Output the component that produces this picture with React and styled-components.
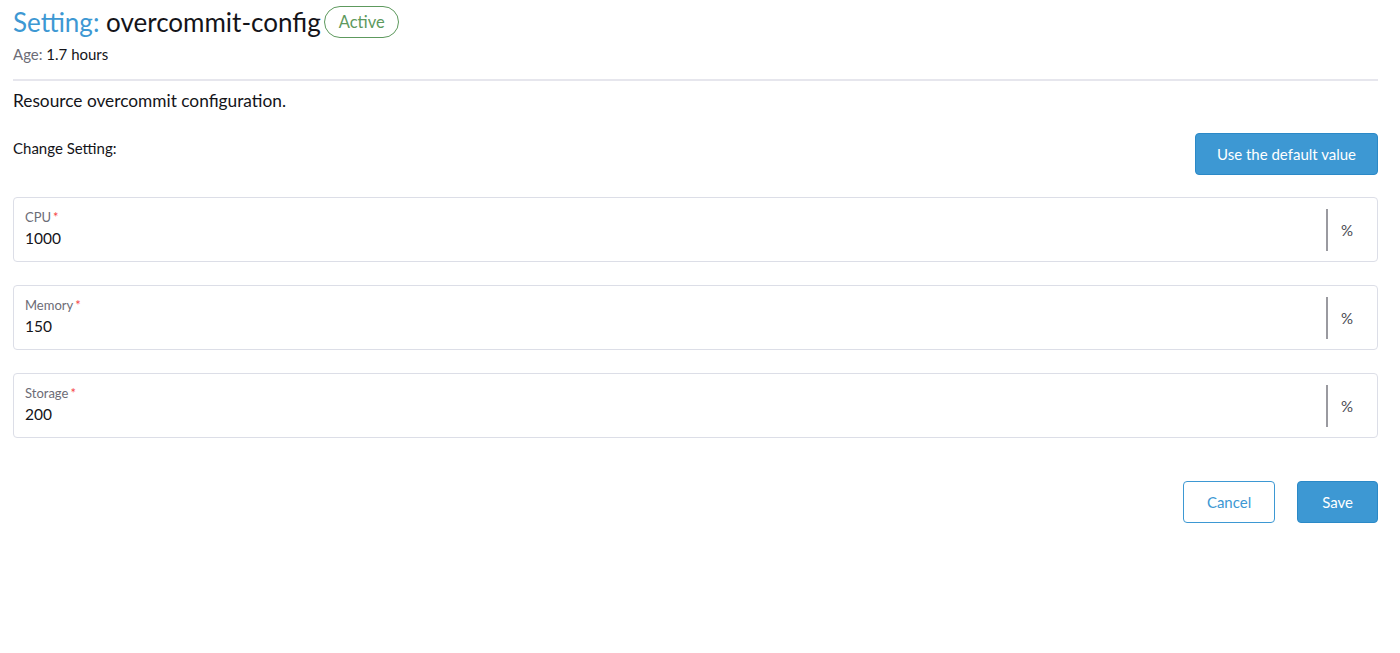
import React from "react";
import styled, { createGlobalStyle } from "styled-components";

const GlobalStyle = createGlobalStyle`
  html, body { margin: 0; padding: 0; background: #fff; }
  body { font-family: Lato, "Noto Sans", sans-serif; color: #141419; }
  * { box-sizing: border-box; }
`;

const Page = styled.div`
  padding: 6px 22px 0 13px;
  display: flex;
  flex-direction: column;
`;

const TitleRow = styled.div`
  display: flex;
  align-items: center;
  gap: 3px;
  height: 32px;
`;

const Title = styled.h1`
  margin: 0;
  font-size: 26px;
  font-weight: 400;
  line-height: 32px;
  color: #141419;
`;

const TitleLead = styled.span`
  color: #3d98d3;
`;

const Badge = styled.span`
  display: inline-flex;
  align-items: center;
  height: 32px;
  padding: 0 13px 0 14px;
  border: 1px solid #5d995d;
  border-radius: 16px;
  color: #5d995d;
  font-size: 16.5px;
`;

const Meta = styled.div`
  margin-top: 6px;
  font-size: 15px;
  line-height: 20px;
`;

const MetaKey = styled.span`
  color: #6c6c76;
`;

const Divider = styled.hr`
  margin: 15px 0 0;
  border: 0;
  height: 2px;
  background: #e6e6ed;
`;

const Description = styled.p`
  margin: 9px 0 0;
  font-size: 17.3px;
  line-height: 22px;
`;

const ChangeRow = styled.div`
  margin-top: 21px;
  display: flex;
  justify-content: space-between;
  align-items: flex-start;
`;

const ChangeLabel = styled.div`
  font-size: 15px;
  line-height: 20px;
  padding-top: 5px;
`;

const Button = styled.button`
  height: 42px;
  padding: 0 ${(p) => p.$pad || 21}px;
  border-radius: 4px;
  font-family: Lato, "Noto Sans", sans-serif;
  font-size: 15px;
  cursor: pointer;
  border: 1px solid ${(p) => (p.$primary ? "#2b89c7" : "#3d98d3")};
  background: ${(p) => (p.$primary ? "#3d98d3" : "#fff")};
  color: ${(p) => (p.$primary ? "#fff" : "#3d98d3")};
`;

const Fields = styled.div`
  margin-top: 22px;
  display: flex;
  flex-direction: column;
  gap: 23px;
`;

const Field = styled.div`
  display: flex;
  align-items: center;
  height: 65px;
  border: 1px solid #dcdee7;
  border-radius: 4px;
`;

const FieldBody = styled.div`
  flex: 1;
  padding: 0 11px 3px;
  display: flex;
  flex-direction: column;
  gap: 3px;
`;

const FieldLabel = styled.label`
  font-size: 13px;
  line-height: 16px;
  color: #6c6c76;
`;

const Required = styled.span`
  color: #f64747;
  margin-left: 2px;
`;

const FieldValue = styled.div`
  font-size: 15.5px;
  line-height: 20px;
  color: #141419;
`;

const Suffix = styled.div`
  height: 42px;
  display: flex;
  align-items: center;
  border-left: 2px solid #9a9aa0;
  padding: 0 24px 0 13px;
  font-size: 15px;
  color: #4a4a52;
`;

const Footer = styled.div`
  margin-top: 43px;
  display: flex;
  justify-content: flex-end;
  gap: 22px;
`;

const fields = [
  { label: "CPU", value: "1000" },
  { label: "Memory", value: "150" },
  { label: "Storage", value: "200" },
];

export default function App() {
  return (
    <>
      <GlobalStyle />
      <Page>
        <TitleRow>
          <Title>
            <TitleLead>Setting:</TitleLead> overcommit-config
          </Title>
          <Badge>Active</Badge>
        </TitleRow>
        <Meta>
          <MetaKey>Age:</MetaKey> 1.7 hours
        </Meta>
        <Divider />
        <Description>Resource overcommit configuration.</Description>
        <ChangeRow>
          <ChangeLabel>Change Setting:</ChangeLabel>
          <Button $primary>Use the default value</Button>
        </ChangeRow>
        <Fields>
          {fields.map((f) => (
            <Field key={f.label}>
              <FieldBody>
                <FieldLabel>
                  {f.label}
                  <Required>*</Required>
                </FieldLabel>
                <FieldValue>{f.value}</FieldValue>
              </FieldBody>
              <Suffix>%</Suffix>
            </Field>
          ))}
        </Fields>
        <Footer>
          <Button $pad={23}>Cancel</Button>
          <Button $primary $pad={24}>Save</Button>
        </Footer>
      </Page>
    </>
  );
}
